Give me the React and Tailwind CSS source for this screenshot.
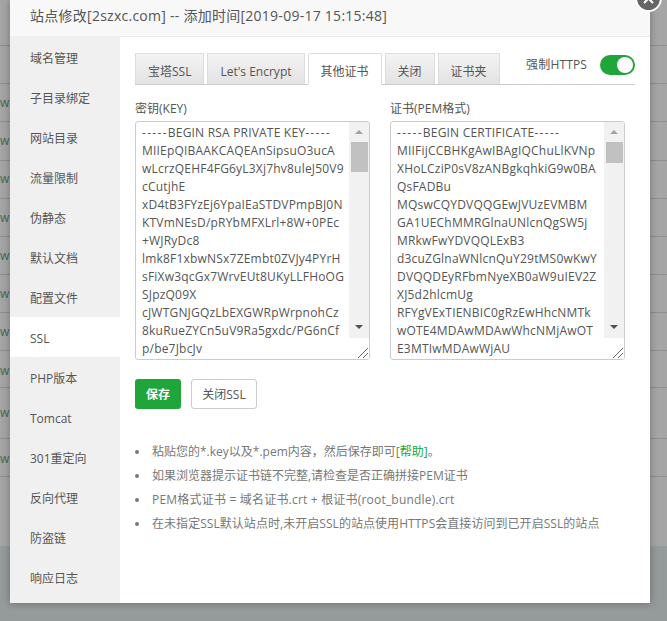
import React from 'react';

const menuItems = ['域名管理', '子目录绑定', '网站目录', '流量限制', '伪静态', '默认文档', '配置文件', 'SSL', 'PHP版本', 'Tomcat', '301重定向', '反向代理', '防盗链', '响应日志'];

const tabs = ['宝塔SSL', "Let's Encrypt", '其他证书', '关闭', '证书夹'];

const keyLines = ['BEGIN RSA PRIVATE KEY', 'MIIEpQIBAAKCAQEAnSipsuO3ucA', 'wLcrzQEHF4FG6yL3Xj7hv8uleJ50V9', 'cCutjhE', 'xD4tB3FYzEj6YpaIEaSTDVPmpBJ0N', 'KTVmNEsD/pRYbMFXLrl+8W+0PEc', '+WJRyDc8', 'lmk8F1xbwNSx7ZEmbt0ZVJy4PYrH', 'sFiXw3qcGx7WrvEUt8UKyLLFHoOG', 'SJpzQ09X', 'cJWTGNJGQzLbEXGWRpWrpnohCz', '8kuRueZYCn5uV9Ra5gxdc/PG6nCf', 'p/be7JbcJv'];

const certLines = ['BEGIN CERTIFICATE', 'MIIFijCCBHKgAwIBAgIQChuLlKVNp', 'XHoLCziP0sV8zANBgkqhkiG9w0BA', 'QsFADBu', 'MQswCQYDVQQGEwJVUzEVMBM', 'GA1UEChMMRGlnaUNlcnQgSW5j', 'MRkwFwYDVQQLExB3', 'd3cuZGlnaWNlcnQuY29tMS0wKwY', 'DVQQDEyRFbmNyeXB0aW9uIEV2Z', 'XJ5d2hlcmUg', 'RFYgVExTIENBIC0gRzEwHhcNMTk', 'wOTE4MDAwMDAwWhcNMjAwOT', 'E3MTIwMDAwWjAU'];

// rows of the site table behind the overlay
const rowLines = [45, 83, 121, 160, 198, 236, 274, 312, 350, 387, 438, 476];
const rowLinks = [96, 134, 172, 211, 249, 287, 325, 364, 406, 452];

const font = 'font-["Open_Sans","Noto_Sans_CJK_SC",sans-serif]';

function CodeBox({ lines, thumb }) {
  return (
    <div className="flex h-[239px] w-[235px] overflow-hidden rounded-[3px] border border-[#cccccc] bg-white">
      <div className="flex-1 overflow-hidden pl-[6px] pt-[2px] text-[12px] leading-[18px] tracking-[0.2px] whitespace-nowrap text-[#555555]">
        {lines.map((line, i) => (
          <div key={i}>
            {i === 0 ? (
              <>
                <span className="tracking-[1.3px]">-----</span>
                {line}
                <span className="tracking-[1.3px]">-----</span>
              </>
            ) : (
              line
            )}
          </div>
        ))}
      </div>
      <div className="flex w-[20px] shrink-0 flex-col bg-[#f1f1f1]">
        <div className="flex h-[20px] items-center justify-center">
          <div className="h-0 w-0 border-x-[4px] border-b-[4px] border-x-transparent border-b-[#a3a3a3]" />
        </div>
        <div className={`${thumb} mx-auto w-[17px] bg-[#c1c1c1]`} />
        <div className="flex-1" />
        <div className="flex h-[20px] items-center justify-center pb-[2px]">
          <div className="h-0 w-0 border-x-[4px] border-t-[4px] border-x-transparent border-t-[#505050]" />
        </div>
        <div className="relative h-[21px] bg-white">
          <svg className="absolute bottom-0 right-0" width="14" height="14" viewBox="0 0 14 14">
            <path d="M3 13 L13 3 M8 13 L13 8" stroke="#666666" strokeWidth="1" fill="none" />
          </svg>
        </div>
      </div>
    </div>
  );
}

function Tip({ className, children }) {
  return (
    <li className="flex items-center">
      <span className="mr-[13px] h-[4px] w-[4px] shrink-0 rounded-full bg-[#777777]" />
      <span className={className}>{children}</span>
    </li>
  );
}

export default function App() {
  return (
    <div className={`relative h-[621px] w-[667px] overflow-hidden bg-[#a5a5a5] ${font}`}>
      {/* page behind the overlay */}
      <div className="absolute bottom-0 left-0 right-0 h-[75px] bg-[#959a9b]" />
      {rowLines.map((y) => (
        <div key={y} className="absolute left-0 right-0 h-px bg-[#8f8f8f]" style={{ top: y }} />
      ))}
      {rowLinks.map((y) => (
        <span key={y} className="absolute left-0 text-[12px] leading-[14px] text-[#3f6b4c]" style={{ top: y }}>
          w
        </span>
      ))}

      {/* dialog */}
      <div className="absolute left-[10px] top-0 flex h-[603px] w-[640px] flex-col bg-white shadow-[0_0_8px_rgba(0,0,0,0.3)]">
        <div className="flex h-[37px] shrink-0 items-center border-b border-[#eeeeee] bg-[#f8f8f8] pb-[5px] pl-[20px] text-[14px] tracking-[0.26px] text-[#555555]">
          站点修改[2szxc.com] -- 添加时间[2019-09-17 15:15:48]
        </div>
        <div className="flex min-h-0 flex-1">
          <div className="w-[110px] shrink-0 bg-[#f0f0f1]">
            {menuItems.map((item) => (
              <div
                key={item}
                className={`flex h-[40px] items-center pl-[20px] pt-[4px] text-[12px] text-[#555555] ${item === 'SSL' ? 'bg-white' : ''}`}
              >
                {item}
              </div>
            ))}
          </div>

          <div className="min-w-0 flex-1 px-[15px] pt-[16px]">
            <div className="flex h-[32px] items-end border-b border-[#cccccc]">
              {tabs.map((tab) => (
                <div
                  key={tab}
                  className={
                    tab === '其他证书'
                      ? 'mr-[3px] -mb-px flex h-[32px] items-center rounded-t-[2px] border border-[#dddddd] border-b-white bg-white px-[12px] pt-[5px] text-[12px] text-[#555555]'
                      : 'mr-[3px] flex h-[31px] items-center border border-b-0 border-[#dddddd] bg-gradient-to-b from-[#f4f4f4] to-[#e2e2e2] px-[12px] pt-[5px] text-[12px] text-[#555555]'
                  }
                >
                  {tab}
                </div>
              ))}
              <div className="mb-[9px] ml-auto flex items-center">
                <span className="mr-[13px] text-[12px] tracking-[0.15px] text-[#555555]">强制HTTPS</span>
                <div className="flex h-[20px] w-[35px] items-center justify-end rounded-full bg-[#20a53a] pr-[2px]">
                  <div className="h-[16px] w-[16px] rounded-full bg-white" />
                </div>
              </div>
            </div>

            <div className="mt-[14px] flex gap-[20px]">
              <div>
                <div className="mb-[2px] h-[20px] text-[12px] leading-[20px] text-[#555555]">密钥(KEY)</div>
                <CodeBox lines={keyLines} thumb="h-[30px]" />
              </div>
              <div>
                <div className="mb-[2px] h-[20px] text-[12px] leading-[20px] text-[#555555]">证书(PEM格式)</div>
                <CodeBox lines={certLines} thumb="h-[21px]" />
              </div>
            </div>

            <div className="mt-[19px] flex gap-[10px]">
              <div className="flex h-[30px] w-[46px] items-center justify-center rounded-[3px] bg-[#20a53a] pt-[2px] text-[12px] font-bold text-white">保存</div>
              <div className="flex h-[30px] w-[66px] items-center justify-center rounded-[3px] border border-[#cccccc] bg-white pt-[2px] text-[12px] text-[#555555]">关闭SSL</div>
            </div>

            <ul className="mt-[31px] text-[12px] leading-[24px] text-[#777777]">
              <Tip>
                粘贴您的*.key以及*.pem内容，然后保存即可<span className="text-[#20a53a]">[帮助]</span>。
              </Tip>
              <Tip>如果浏览器提示证书链不完整,请检查是否正确拼接PEM证书</Tip>
              <Tip className="tracking-[0.2px]">PEM格式证书 = 域名证书.crt + 根证书(root_bundle).crt</Tip>
              <Tip className="tracking-[0.05px]">在未指定SSL默认站点时,未开启SSL的站点使用HTTPS会直接访问到已开启SSL的站点</Tip>
            </ul>
          </div>
        </div>
      </div>

      {/* close button */}
      <div className="absolute left-[635px] top-[-15px] flex h-[27px] w-[27px] items-center justify-center rounded-full border-2 border-white bg-[#666666]">
        <svg width="13" height="13" viewBox="0 0 13 13">
          <path d="M2 2 L11 11 M11 2 L2 11" stroke="#ffffff" strokeWidth="2" />
        </svg>
      </div>
    </div>
  );
}
